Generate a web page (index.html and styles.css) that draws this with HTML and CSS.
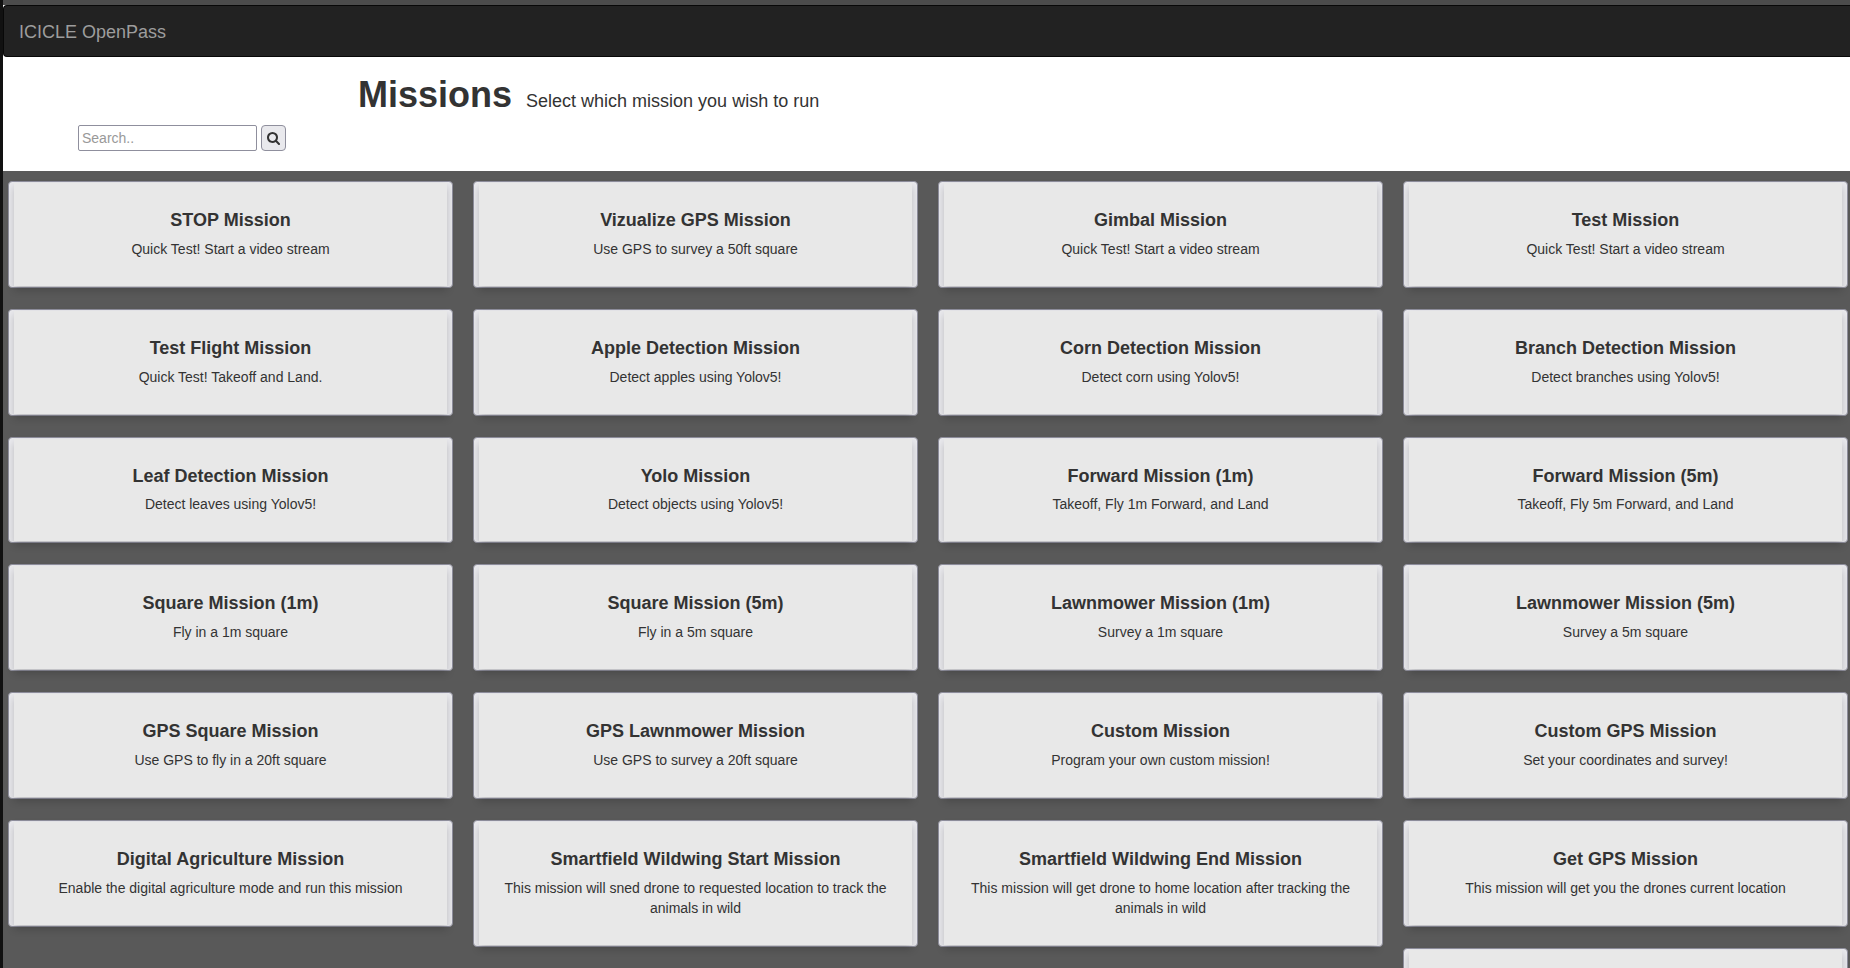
FILE: index.html
```html
<!DOCTYPE html>
<html lang="en">
<head>
<meta charset="utf-8">
<title>ICICLE OpenPass</title>
<link rel="stylesheet" href="styles.css">
</head>
<body>
<div class="page">
<div class="top">
<nav class="navbar"><a class="brand" href="#">ICICLE OpenPass</a></nav>
<header class="header">
<div class="heading"><h1>Missions</h1><p>Select which mission you wish to run</p></div>
<form class="search">
<input type="text" placeholder="Search.." aria-label="Search missions">
<button type="submit" aria-label="Search"><svg viewBox="0 0 1664 1664" width="13" height="13"><path fill="currentColor" d="M1152 704q0-185-131.500-316.500t-316.500-131.500-316.500 131.500-131.500 316.500 131.500 316.500 316.500 131.500 316.500-131.500 131.500-316.500zm512 832q0 52-38 90t-90 38q-54 0-90-38l-343-342q-179 124-399 124-143 0-273.500-55.500t-225-150-150-225-55.500-273.500 55.500-273.500 150-225 225-150 273.500-55.500 273.500 55.500 225 150 150 225 55.500 273.500q0 220-124 399l343 343q37 37 37 90z"/></svg></button>
</form>
</header>
</div>
<main>
<ul class="missions">
<li><button class="mission" type="button"><span class="card"><strong>STOP Mission</strong><span>Quick Test! Start a video stream</span></span></button></li>
<li><button class="mission" type="button"><span class="card"><strong>Vizualize GPS Mission</strong><span>Use GPS to survey a 50ft square</span></span></button></li>
<li><button class="mission" type="button"><span class="card"><strong>Gimbal Mission</strong><span>Quick Test! Start a video stream</span></span></button></li>
<li><button class="mission" type="button"><span class="card"><strong>Test Mission</strong><span>Quick Test! Start a video stream</span></span></button></li>
<li><button class="mission" type="button"><span class="card"><strong>Test Flight Mission</strong><span>Quick Test! Takeoff and Land.</span></span></button></li>
<li><button class="mission" type="button"><span class="card"><strong>Apple Detection Mission</strong><span>Detect apples using Yolov5!</span></span></button></li>
<li><button class="mission" type="button"><span class="card"><strong>Corn Detection Mission</strong><span>Detect corn using Yolov5!</span></span></button></li>
<li><button class="mission" type="button"><span class="card"><strong>Branch Detection Mission</strong><span>Detect branches using Yolov5!</span></span></button></li>
<li><button class="mission" type="button"><span class="card"><strong>Leaf Detection Mission</strong><span>Detect leaves using Yolov5!</span></span></button></li>
<li><button class="mission" type="button"><span class="card"><strong>Yolo Mission</strong><span>Detect objects using Yolov5!</span></span></button></li>
<li><button class="mission" type="button"><span class="card"><strong>Forward Mission (1m)</strong><span>Takeoff, Fly 1m Forward, and Land</span></span></button></li>
<li><button class="mission" type="button"><span class="card"><strong>Forward Mission (5m)</strong><span>Takeoff, Fly 5m Forward, and Land</span></span></button></li>
<li><button class="mission" type="button"><span class="card"><strong>Square Mission (1m)</strong><span>Fly in a 1m square</span></span></button></li>
<li><button class="mission" type="button"><span class="card"><strong>Square Mission (5m)</strong><span>Fly in a 5m square</span></span></button></li>
<li><button class="mission" type="button"><span class="card"><strong>Lawnmower Mission (1m)</strong><span>Survey a 1m square</span></span></button></li>
<li><button class="mission" type="button"><span class="card"><strong>Lawnmower Mission (5m)</strong><span>Survey a 5m square</span></span></button></li>
<li><button class="mission" type="button"><span class="card"><strong>GPS Square Mission</strong><span>Use GPS to fly in a 20ft square</span></span></button></li>
<li><button class="mission" type="button"><span class="card"><strong>GPS Lawnmower Mission</strong><span>Use GPS to survey a 20ft square</span></span></button></li>
<li><button class="mission" type="button"><span class="card"><strong>Custom Mission</strong><span>Program your own custom mission!</span></span></button></li>
<li><button class="mission" type="button"><span class="card"><strong>Custom GPS Mission</strong><span>Set your coordinates and survey!</span></span></button></li>
<li><button class="mission" type="button"><span class="card"><strong>Digital Agriculture Mission</strong><span>Enable the digital agriculture mode and run this mission</span></span></button></li>
<li><button class="mission" type="button"><span class="card"><strong>Smartfield Wildwing Start Mission</strong><span>This mission will sned drone to requested location to track the animals in wild</span></span></button></li>
<li><button class="mission" type="button"><span class="card"><strong>Smartfield Wildwing End Mission</strong><span>This mission will get drone to home location after tracking the animals in wild</span></span></button></li>
<li><button class="mission" type="button"><span class="card"><strong>Get GPS Mission</strong><span>This mission will get you the drones current location</span></span></button></li>
<li><button class="mission" type="button" aria-label="Mission"><span class="card"><strong></strong><span></span></span></button></li>
</ul>
</main>
</div>
</body>
</html>
```

FILE: styles.css
```css
* { box-sizing: border-box; }

html { height: 100%; overflow: hidden; }

body {
  margin: 0;
  height: 100%;
  overflow: hidden;
  background: #595959;
  color: #333;
  font: 14px/20px "Liberation Sans", Arial, sans-serif;
}

.page {
  min-height: 100%;
  border-left: 3px solid #111;
}

.top {
  background: #fff;
  border-top: 5px solid #4c4c4c;
}

.navbar {
  display: flex;
  align-items: center;
  height: 52px;
  padding: 2px 15px 0;
  background: #222;
  border: 1px solid #080808;
  border-right: 0;
  border-radius: 4px 0 0 4px;
}

.brand {
  color: #9d9d9d;
  font-size: 18px;
  text-decoration: none;
}

.header { padding: 18px 0 20px 75px; }

.heading {
  display: flex;
  align-items: baseline;
  gap: 14px;
  margin: 0 0 10px 280px;
}

.heading h1 {
  margin: 0;
  font-size: 36px;
  line-height: 40px;
}

.heading p {
  margin: 0;
  font-size: 18px;
}

.search {
  display: flex;
  gap: 4px;
}

.search input,
.search button {
  height: 26px;
  border: 1px solid #8f8f9d;
  font: inherit;
  color: inherit;
}

.search input {
  width: 179px;
  padding: 1px 3px;
  border-radius: 2px;
  background: #fff;
}

.search input::placeholder { color: #999; }

.search button {
  display: flex;
  align-items: center;
  justify-content: center;
  width: 25px;
  padding: 0;
  border-radius: 4px;
  background: #e9e9ed;
}

/* The row runs past the window edge by the last card's gutter. */
.missions {
  margin: 10px -18px 0 5px;
  padding: 0;
  list-style: none;
}

.missions li {
  float: left;
  width: 25%;
  padding: 0 20px 21px 0;
}

.mission {
  display: block;
  width: 100%;
  padding: 1px 5px;
  border: 1px solid #8f8f9d;
  border-radius: 4px;
  background: #e9e9ed;
  color: inherit;
  font: inherit;
  text-align: center;
}

.card {
  display: flex;
  flex-direction: column;
  gap: 8px;
  padding: 28px 16px 27px;
  background: #e8e8e8;
  box-shadow: 0 4px 8px 0 rgba(0, 0, 0, 0.2);
}

.card strong {
  font-size: 18px;
  line-height: 1.1;
}
```
